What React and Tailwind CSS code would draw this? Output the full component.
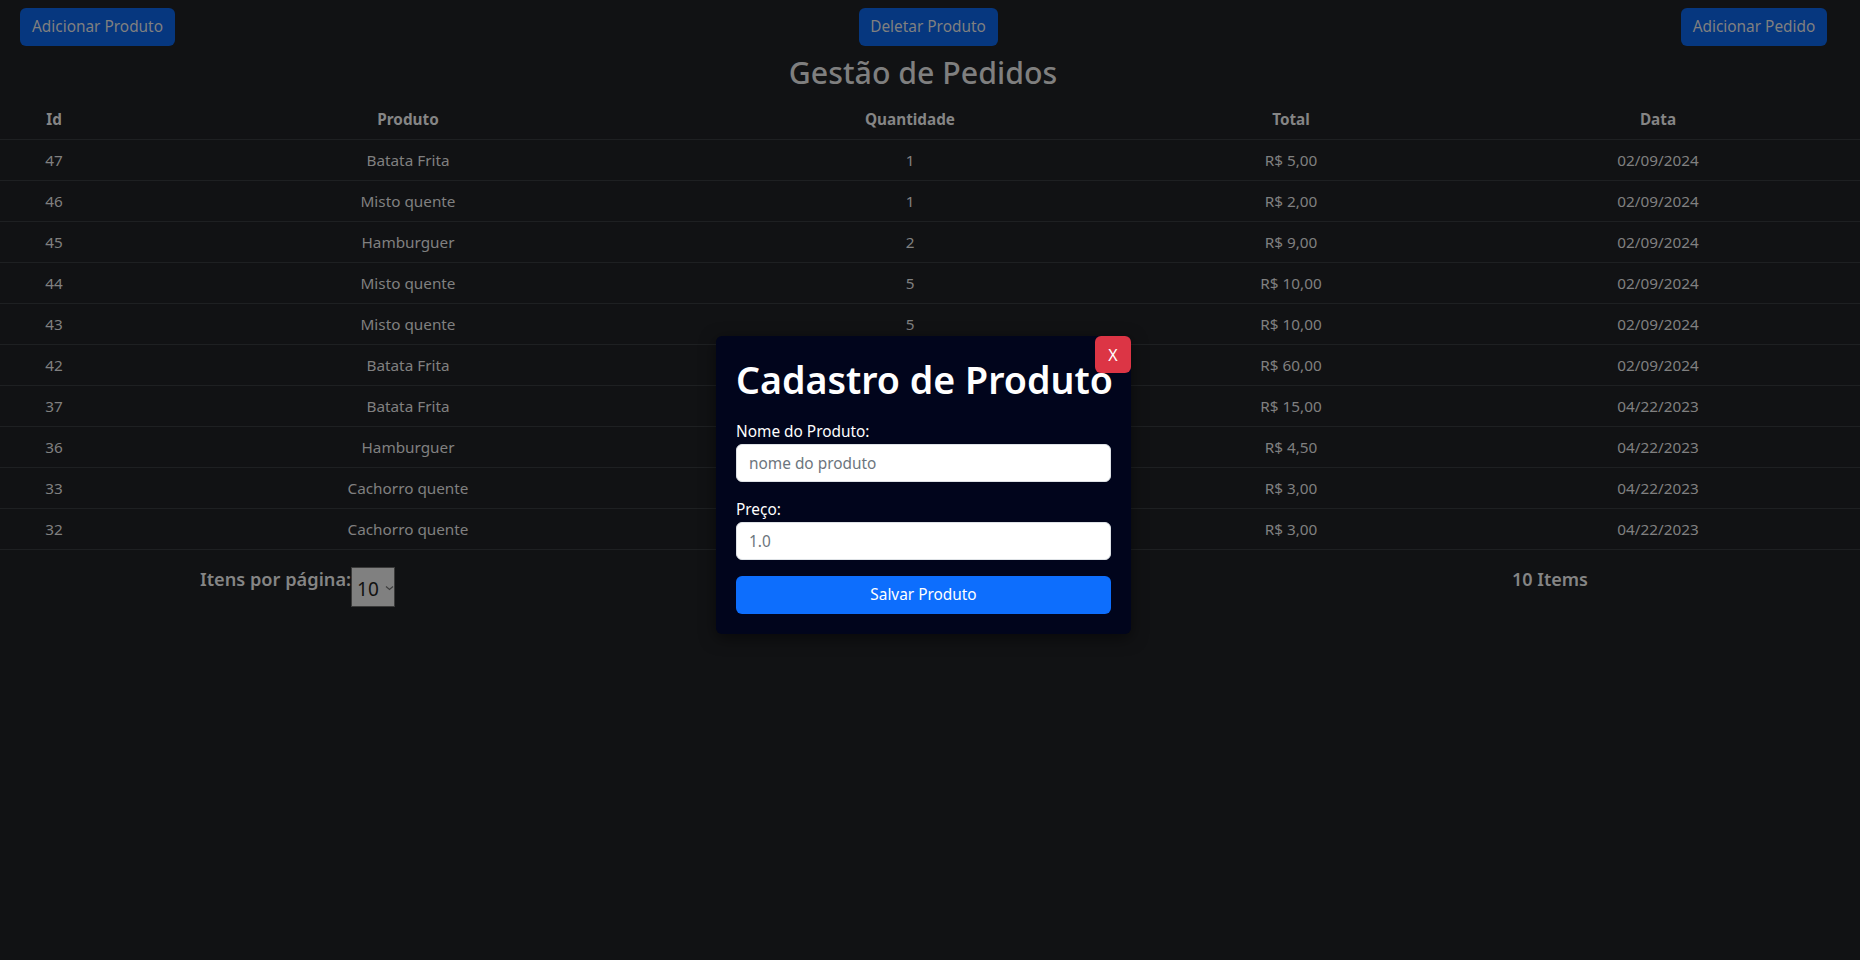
import React from "react";

const rows = [
  ["47", "Batata Frita", "1", "R$ 5,00", "02/09/2024"],
  ["46", "Misto quente", "1", "R$ 2,00", "02/09/2024"],
  ["45", "Hamburguer", "2", "R$ 9,00", "02/09/2024"],
  ["44", "Misto quente", "5", "R$ 10,00", "02/09/2024"],
  ["43", "Misto quente", "5", "R$ 10,00", "02/09/2024"],
  ["42", "Batata Frita", "12", "R$ 60,00", "02/09/2024"],
  ["37", "Batata Frita", "3", "R$ 15,00", "04/22/2023"],
  ["36", "Hamburguer", "1", "R$ 4,50", "04/22/2023"],
  ["33", "Cachorro quente", "1", "R$ 3,00", "04/22/2023"],
  ["32", "Cachorro quente", "1", "R$ 3,00", "04/22/2023"],
];

function Row({ cells, head }) {
  return (
    <div
      className={`flex h-[41px] items-center border-b border-[#1e2022] text-[15.3px] leading-[24px] ${
        head ? "font-bold text-[#858585]" : "text-[#808080]"
      }`}
    >
      <div className="w-[108px] text-center">{cells[0]}</div>
      <div className="w-[600px] text-center">{cells[1]}</div>
      <div className="w-[404px] text-center">{cells[2]}</div>
      <div className="w-[358px] text-center">{cells[3]}</div>
      <div className="w-[376px] text-center">{cells[4]}</div>
      <div className="flex-1" />
    </div>
  );
}

export default function App() {
  return (
    <div
      className="relative min-h-[960px] w-full bg-[#111214]"
      style={{ fontFamily: '"Noto Sans", "Open Sans", sans-serif' }}
    >
      <div className="flex justify-between pl-[20px] pr-[33px] pt-[8px]">
        <button className="h-[38px] w-[155px] rounded-[6px] bg-[#06377f] text-[15.4px] leading-[24px] text-[#808080]">
          Adicionar Produto
        </button>
        <button className="h-[38px] w-[139px] rounded-[6px] bg-[#06377f] text-[15.4px] leading-[24px] text-[#808080]">
          Deletar Produto
        </button>
        <button className="h-[38px] w-[146px] rounded-[6px] bg-[#06377f] text-[15.4px] leading-[24px] text-[#808080]">
          Adicionar Pedido
        </button>
      </div>

      <h2 className="mt-[8px] mb-[7px] pr-[14px] text-center text-[30.3px] font-medium leading-[38px] text-[#7f7f7f]">
        Gestão de Pedidos
      </h2>

      <div>
        <Row head cells={["Id", "Produto", "Quantidade", "Total", "Data"]} />
        {rows.map((r) => (
          <Row key={r[0]} cells={r} />
        ))}
      </div>

      <div className="mt-[17px] flex">
        <div className="flex w-[595px] items-start justify-center">
          <span className="text-[18.2px] font-semibold leading-[24px] text-[#858585]">
            Itens por página:
          </span>
          <div className="flex h-[40px] w-[44px] items-center border border-[#3a3a3a] bg-[#808080] pl-[5px]">
            <span className="mt-[4px] text-[19px] leading-[24px] text-[#111]">10</span>
            <svg className="ml-[6px] mt-[2px]" width="9" height="6" viewBox="0 0 9 6">
              <path d="M1 1.5 L4.5 4.5 L8 1.5" fill="none" stroke="#3d3d3d" strokeWidth="1.2" />
            </svg>
          </div>
        </div>
        <div className="flex-1" />
        <div className="flex w-[620px] justify-center">
          <span className="text-[18px] font-semibold leading-[24px] text-[#858585]">10 Items</span>
        </div>
      </div>

      <div className="absolute left-[716px] top-[336px] w-[415px] rounded-[6px] bg-[#01051c] p-[20px] shadow-[0_4px_16px_rgba(0,0,0,0.5)]">
        <h1 className="mb-[16px] whitespace-nowrap text-[37.6px] font-semibold leading-[48px] text-white">
          Cadastro de Produto
        </h1>
        <button className="absolute right-0 top-0 flex h-[37px] w-[36px] items-center justify-center rounded-[6px] bg-[#dc3545] text-[16px] text-white">
          X
        </button>
        <div className="mb-[16px]">
          <label className="block text-[15.4px] leading-[24px] text-white">Nome do Produto:</label>
          <input
            className="block h-[38px] w-full rounded-[6px] border border-[#dee2e6] bg-white px-[12px] text-[15.4px] text-[#212529] outline-none placeholder:text-[#6c757d]"
            placeholder="nome do produto"
          />
        </div>
        <div className="mb-[16px]">
          <label className="block text-[15.4px] leading-[24px] text-white">Preço:</label>
          <input
            className="block h-[38px] w-full rounded-[6px] border border-[#dee2e6] bg-white px-[12px] text-[15.4px] text-[#212529] outline-none placeholder:text-[#6c757d]"
            placeholder="1.0"
          />
        </div>
        <button className="block h-[38px] w-full rounded-[6px] bg-[#0d6efd] text-[15.4px] leading-[24px] text-white">
          Salvar Produto
        </button>
      </div>
    </div>
  );
}
